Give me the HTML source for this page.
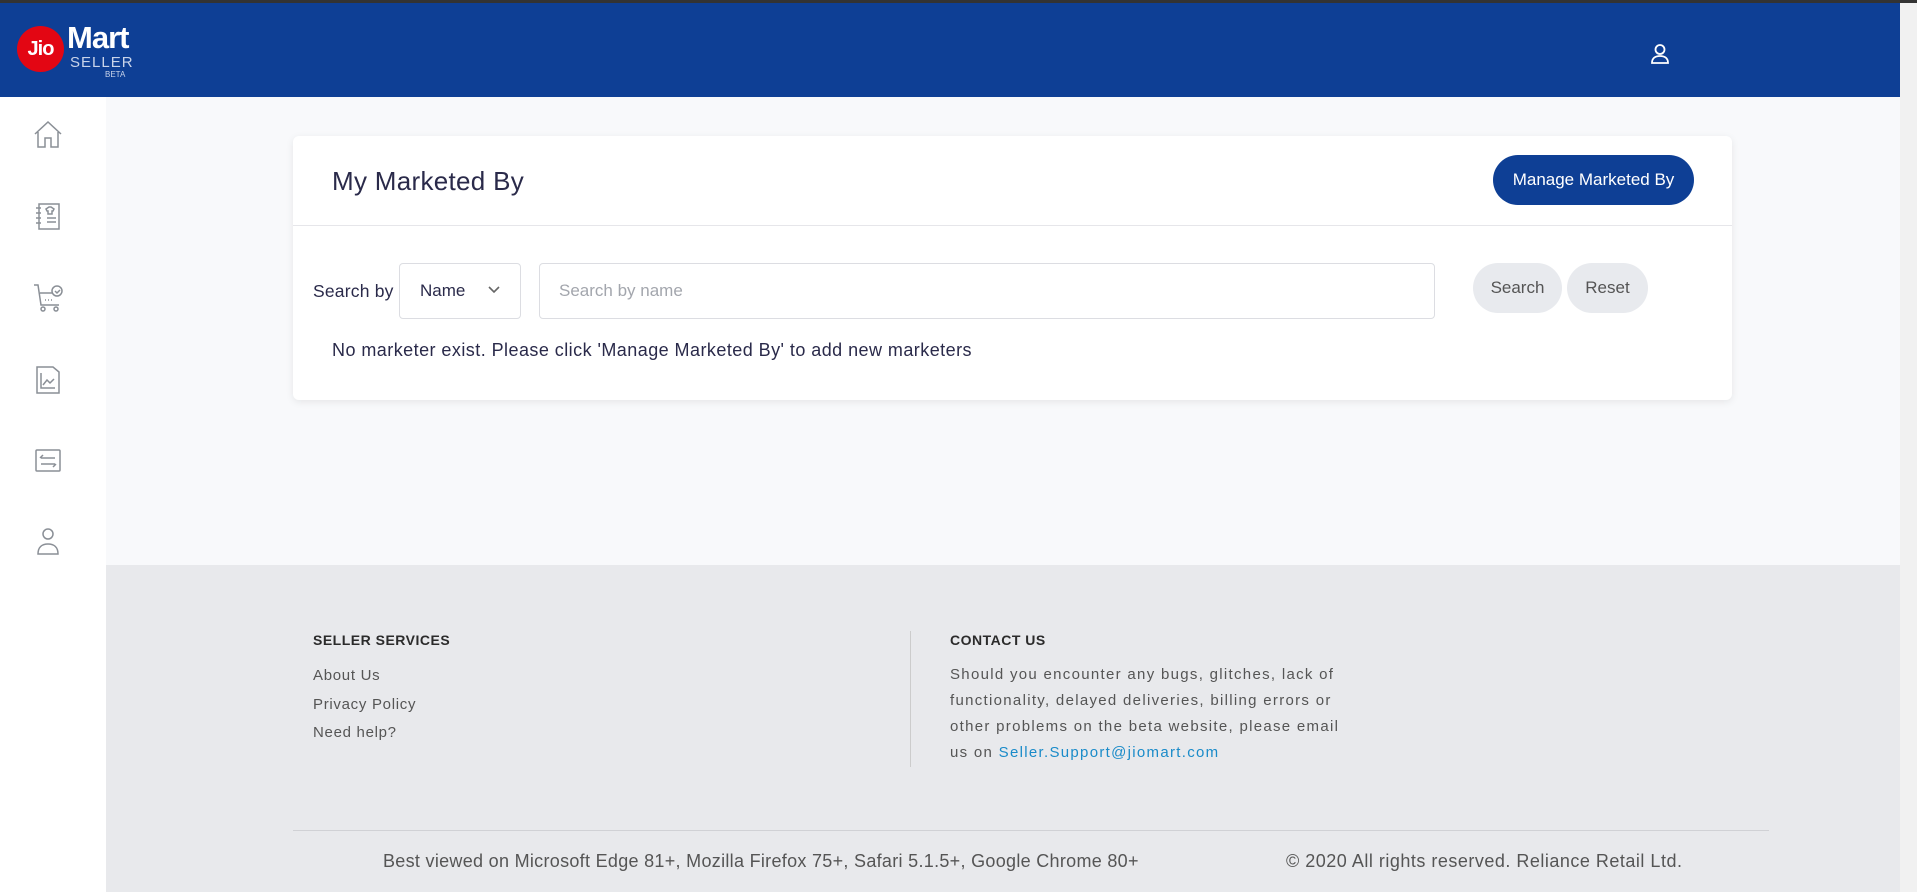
<!DOCTYPE html>
<html><head><meta charset="utf-8"><style>
*{box-sizing:border-box;margin:0;padding:0}
body{width:1917px;height:892px;overflow:hidden;font-family:"Liberation Sans",sans-serif;background:#f8f9fb;position:relative;color:#2a2a4a}
.abs{position:absolute}
#top{left:0;top:0;width:1917px;height:3px;background:#333}
#hdr{left:0;top:3px;width:1900px;height:94px;background:#0e3f95}
#sb{left:1900px;top:3px;width:17px;height:889px;background:#f1f1f1}
#side{left:0;top:97px;width:106px;height:795px;background:#fff}
#foot{left:106px;top:565px;width:1794px;height:327px;background:#e8e9ec}
.card{left:293px;top:136px;width:1439px;height:264px;background:#fff;border-radius:6px;box-shadow:0 2px 8px rgba(0,0,0,.08)}
.ico{left:33px;width:30px;height:30px}
</style></head><body>
<div id="top" class="abs"></div>
<div id="hdr" class="abs">
 <div class="abs" style="left:17px;top:23px;width:47px;height:46px;border-radius:50%;background:#e30613;color:#fff;font-weight:bold;font-size:20px;line-height:46px;text-align:center;letter-spacing:-1px">Jio</div>
 <div class="abs" style="left:67px;top:17px;color:#fff;font-weight:bold;font-size:31px;letter-spacing:-1px">Mart</div>
 <div class="abs" style="left:70px;top:51px;color:#c9d4ea;font-size:15px;letter-spacing:1px">SELLER</div>
 <div class="abs" style="left:105px;top:67px;color:#c9d4ea;font-size:8px">BETA</div>
 <svg class="abs" style="left:1650px;top:40px" width="20" height="22" viewBox="0 0 20 22" fill="none" stroke="#fff" stroke-width="1.8"><circle cx="10" cy="6.5" r="4.5"/><path d="M2 20c0-5 3.5-7 8-7s8 2 8 7z"/></svg>
</div>
<div id="sb" class="abs"></div>
<div id="side" class="abs">
 <svg class="abs ico" style="top:23px" viewBox="0 0 30 30" fill="none" stroke="#8a8f96" stroke-width="1.5"><path d="M2 14L15 2l13 12M5 12v15h7v-9h6v9h7V12"/></svg>
 <svg class="abs ico" style="top:105px" viewBox="0 0 30 30" fill="none" stroke="#8a8f96" stroke-width="1.5"><rect x="6" y="2" width="20" height="25"/><path d="M3 6h5M3 11h5M3 16h5M3 21h5M14 16h9M14 20h9M13 7l3-2h2l3 2-1 2h-1v3h-4V9h-1z"/></svg>
 <svg class="abs ico" style="top:186px" viewBox="0 0 30 30" fill="none" stroke="#8a8f96" stroke-width="1.5"><path d="M1 2h4l3 20h18M7 10h13"/><circle cx="10" cy="26" r="2"/><circle cx="23" cy="26" r="2"/><circle cx="24" cy="8" r="5"/><path d="M22 8l2 2 3-3M12 17h1M15 17h1M18 17h1"/></svg>
 <svg class="abs ico" style="top:268px" viewBox="0 0 30 30" fill="none" stroke="#8a8f96" stroke-width="1.5"><path d="M4 2h16l6 5v21H4zM8 8v15h14M10 20l4-5 3 3 4-4"/></svg>
 <svg class="abs ico" style="top:349px" viewBox="0 0 30 30" fill="none" stroke="#8a8f96" stroke-width="1.5"><rect x="3" y="4" width="24" height="21" rx="1"/><path d="M8 12h14M10 9l-3 3M8 18h14M20 21l3-3"/></svg>
 <svg class="abs ico" style="top:429px" viewBox="0 0 30 30" fill="none" stroke="#8a8f96" stroke-width="1.5"><circle cx="15" cy="8" r="5"/><path d="M5 28c0-7 4-10 10-10s10 3 10 10z"/></svg>
</div>
<div class="abs card">
 <div class="abs" style="left:39px;top:30px;font-size:26px;letter-spacing:.3px;color:#2a2a4a">My Marketed By</div>
 <div class="abs" style="left:1200px;top:19px;width:201px;height:50px;border-radius:25px;background:#0e3f95;color:#fff;font-size:17px;line-height:50px;text-align:center">Manage Marketed By</div>
 <div class="abs" style="left:0;top:89px;width:1439px;height:1px;background:#e6e6ea"></div>
 <div class="abs" style="left:20px;top:145px;font-size:17.5px;letter-spacing:.2px">Search by</div>
 <div class="abs" style="left:106px;top:127px;width:122px;height:56px;border:1px solid #dcdde2;border-radius:4px;font-size:17px;line-height:54px;padding-left:20px">Name<svg class="abs" style="left:88px;top:22px" width="12" height="8" viewBox="0 0 12 8" fill="none" stroke="#666" stroke-width="1.6"><path d="M1 1l5 5 5-5"/></svg></div>
 <div class="abs" style="left:246px;top:127px;width:896px;height:56px;border:1px solid #dcdde2;border-radius:4px;font-size:17px;line-height:54px;padding-left:19px;color:#a3a6ad">Search by name</div>
 <div class="abs" style="left:1180px;top:127px;width:89px;height:50px;border-radius:25px;background:#e8eaee;font-size:17px;line-height:50px;text-align:center;color:#555">Search</div>
 <div class="abs" style="left:1274px;top:127px;width:81px;height:50px;border-radius:25px;background:#e8eaee;font-size:17px;line-height:50px;text-align:center;color:#555">Reset</div>
 <div class="abs" style="left:39px;top:204px;font-size:18px;letter-spacing:.45px;white-space:nowrap">No marketer exist. Please click 'Manage Marketed By' to add new marketers</div>
</div>
<div id="foot" class="abs">
 <div class="abs" style="left:207px;top:67px;font-size:14px;font-weight:bold;color:#2b2b2b;letter-spacing:.5px">SELLER SERVICES</div>
 <div class="abs" style="left:207px;top:97px;font-size:15px;color:#555;line-height:28.5px;letter-spacing:.7px">About Us<br>Privacy Policy<br>Need help?</div>
 <div class="abs" style="left:804px;top:66px;width:1px;height:136px;background:#ccc"></div>
 <div class="abs" style="left:844px;top:67px;font-size:14px;font-weight:bold;color:#2b2b2b;letter-spacing:.5px">CONTACT US</div>
 <div class="abs" style="left:844px;top:97px;width:408px;font-size:15px;color:#555;line-height:26px;letter-spacing:1.3px">Should you encounter any bugs, glitches, lack of functionality, delayed deliveries, billing errors or other problems on the beta website, please email us on <span style="color:#1a8bc9">Seller.Support@jiomart.com</span></div>
 <div class="abs" style="left:187px;top:265px;width:1476px;height:1px;background:#d0d1d5"></div>
 <div class="abs" style="left:277px;top:286px;font-size:18px;color:#555;letter-spacing:.3px;white-space:nowrap">Best viewed on Microsoft Edge 81+, Mozilla Firefox 75+, Safari 5.1.5+, Google Chrome 80+</div>
 <div class="abs" style="left:1180px;top:286px;font-size:18px;color:#555;letter-spacing:.5px;white-space:nowrap">© 2020 All rights reserved. Reliance Retail Ltd.</div>
</div>
</body></html>
